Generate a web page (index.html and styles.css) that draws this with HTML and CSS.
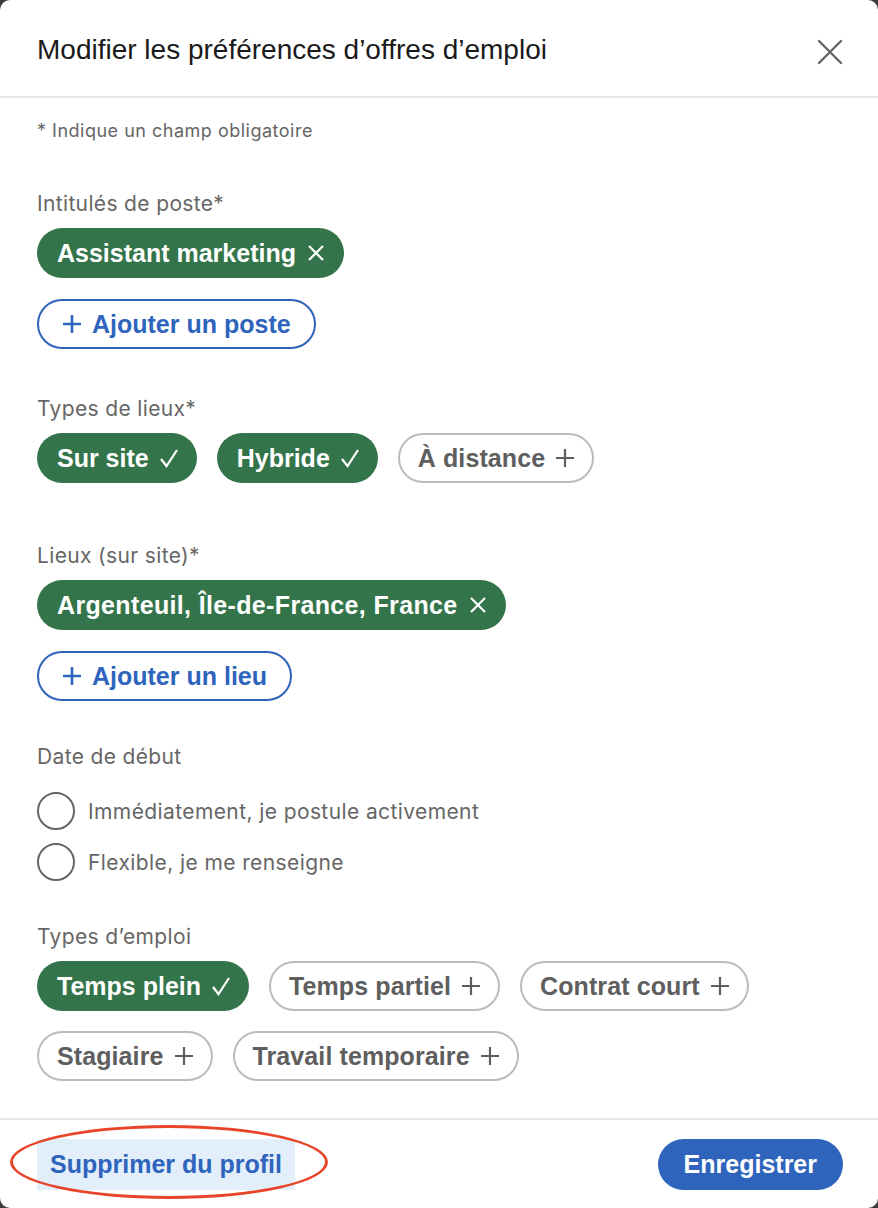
FILE: index.html
```html
<!DOCTYPE html>
<html lang="fr">
<head>
    <meta charset="UTF-8">
    <meta name="viewport" content="width=device-width, initial-scale=1.0">
    <title>Modifier les préférences d’offres d’emploi</title>
    <link rel="stylesheet" href="styles.css">
</head>
<body>
    <div class="modal">
        <div class="modal-header">
            <h2 class="modal-title">Modifier les préférences d’offres d’emploi</h2>
            <button class="close-btn" aria-label="Fermer">
                <svg width="26" height="26" viewBox="0 0 26 26"><path d="M2 2 L24 24 M24 2 L2 24" stroke="#666" stroke-width="2.4" stroke-linecap="round"/></svg>
            </button>
        </div>

        <div class="modal-body">
            <p class="required-note">* Indique un champ obligatoire</p>

            <div class="field field-first">
                <div class="field-label">Intitulés de poste*</div>
                <div class="chips">
                    <span class="chip chip-selected">Assistant marketing<svg class="icon" viewBox="0 0 20 20"><path d="M3 3 L17 17 M17 3 L3 17"/></svg></span>
                </div>
                <button class="add-btn"><svg class="icon plus-icon" viewBox="0 0 20 20"><path d="M10 1 V19 M1 10 H19"/></svg>Ajouter un poste</button>
            </div>

            <div class="field field-after-btn">
                <div class="field-label">Types de lieux*</div>
                <div class="chips">
                    <span class="chip chip-selected">Sur site<svg class="icon" viewBox="0 0 20 20"><path d="M2 11 L7.5 18 L18 2"/></svg></span>
                    <span class="chip chip-selected">Hybride<svg class="icon" viewBox="0 0 20 20"><path d="M2 11 L7.5 18 L18 2"/></svg></span>
                    <span class="chip chip-outline">À distance<svg class="icon" viewBox="0 0 20 20"><path d="M10 1 V19 M1 10 H19"/></svg></span>
                </div>
            </div>

            <div class="field field-after-chips">
                <div class="field-label">Lieux (sur site)*</div>
                <div class="chips">
                    <span class="chip chip-selected chip-wide">Argenteuil, Île-de-France, France<svg class="icon" viewBox="0 0 20 20"><path d="M3 3 L17 17 M17 3 L3 17"/></svg></span>
                </div>
                <button class="add-btn"><svg class="icon plus-icon" viewBox="0 0 20 20"><path d="M10 1 V19 M1 10 H19"/></svg>Ajouter un lieu</button>
            </div>

            <div class="field field-tight">
                <div class="field-label">Date de début</div>
                <div class="radios">
                    <label class="radio-row"><span class="radio"></span>Immédiatement, je postule activement</label>
                    <label class="radio-row"><span class="radio"></span>Flexible, je me renseigne</label>
                </div>
            </div>

            <div class="field field-tight">
                <div class="field-label">Types d’emploi</div>
                <div class="chips chips-wrap">
                    <span class="chip chip-selected">Temps plein<svg class="icon" viewBox="0 0 20 20"><path d="M2 11 L7.5 18 L18 2"/></svg></span>
                    <span class="chip chip-outline">Temps partiel<svg class="icon" viewBox="0 0 20 20"><path d="M10 1 V19 M1 10 H19"/></svg></span>
                    <span class="chip chip-outline">Contrat court<svg class="icon" viewBox="0 0 20 20"><path d="M10 1 V19 M1 10 H19"/></svg></span>
                    <span class="chip chip-outline">Stagiaire<svg class="icon" viewBox="0 0 20 20"><path d="M10 1 V19 M1 10 H19"/></svg></span>
                    <span class="chip chip-outline">Travail temporaire<svg class="icon" viewBox="0 0 20 20"><path d="M10 1 V19 M1 10 H19"/></svg></span>
                </div>
            </div>
        </div>

        <div class="modal-footer">
            <div class="delete-wrap">
                <button class="delete-btn">Supprimer du profil</button>
                <span class="annotation"></span>
            </div>
            <button class="save-btn">Enregistrer</button>
        </div>
    </div>
</body>
</html>
```

FILE: styles.css
```css
body {
    margin: 0;
    padding: 0;
    background: #3b3b3b;
    font-family: "Liberation Sans", Arial, sans-serif;
}
.modal {
    width: 878px;
    height: 1208px;
    background: #fff;
    border-radius: 10px;
    display: flex;
    flex-direction: column;
}
.modal-header {
    display: flex;
    justify-content: space-between;
    align-items: center;
    height: 98px;
    padding: 0 35px 0 37px;
    border-bottom: 2px solid #e8e8e8;
    box-sizing: border-box;
}
.modal-title {
    margin: 0 0 -4px;
    font-size: 28px;
    font-weight: 400;
    color: #1a1a1a;
}
.close-btn {
    background: none;
    border: none;
    padding: 0;
    margin-top: 8px;
    width: 26px;
    height: 26px;
    cursor: pointer;
}
.modal-body {
    flex: 1;
    padding: 0 37px;
}
.required-note {
    margin: 23px 0 0;
    font-family: Inter, "Liberation Sans", sans-serif;
    font-size: 18px;
    line-height: 20px;
    letter-spacing: 0.5px;
    color: #666;
}
.field-first { margin-top: 51px; }
.field-after-btn { margin-top: 48px; }
.field-after-chips { margin-top: 61px; }
.field-tight { margin-top: 44px; }
.field-label {
    font-family: Inter, "Liberation Sans", sans-serif;
    font-size: 21px;
    line-height: 24px;
    letter-spacing: 0.35px;
    color: #666;
    margin-bottom: 12px;
}
.chips {
    display: flex;
    flex-wrap: wrap;
    gap: 21px 20px;
}
.chips-wrap {
    row-gap: 20px;
}
.chip {
    display: inline-flex;
    align-items: center;
    height: 50px;
    box-sizing: border-box;
    padding: 0 18px 0 20px;
    border-radius: 25px;
    font-size: 25px;
    font-weight: 700;
    white-space: pre;
}
.chip-wide {
    letter-spacing: 0.35px;
}
.icon {
    width: 20px;
    height: 20px;
    margin-left: 10px;
    fill: none;
    stroke: currentColor;
    stroke-width: 2.2;
}
.chip-selected {
    background: #34744a;
    color: #fff;
}
.chip-outline {
    border: 2px solid #bcbcbc;
    color: #5e5e5e;
    padding: 0 17px 0 18px;
    letter-spacing: 0.1px;
}
.add-btn {
    display: flex;
    align-items: center;
    margin-top: 21px;
    height: 50px;
    padding: 0 23px;
    border: 2px solid #2e64bc;
    border-radius: 25px;
    background: #fff;
    color: #2e64bc;
    font-family: inherit;
    font-size: 25px;
    font-weight: 700;
    white-space: pre;
}
.add-btn .plus-icon {
    margin: 0 10px 0 0;
    stroke-width: 2.6;
}
.radios {
    display: flex;
    flex-direction: column;
    gap: 13px;
    margin-top: 23px;
}
.radio-row {
    display: flex;
    align-items: center;
    gap: 13px;
    height: 38px;
    font-family: Inter, "Liberation Sans", sans-serif;
    font-size: 21px;
    letter-spacing: 0.4px;
    color: #666;
}
.radio {
    width: 38px;
    height: 38px;
    box-sizing: border-box;
    border: 2px solid #666;
    border-radius: 50%;
}
.modal-footer {
    display: flex;
    justify-content: space-between;
    align-items: center;
    height: 88px;
    padding: 0 35px 0 37px;
    border-top: 2px solid #e8e8e8;
}
.delete-wrap {
    position: relative;
}
.delete-btn {
    background: #e3eefb;
    border: none;
    height: 51px;
    padding: 0 13px;
    color: #2e64bc;
    font-family: inherit;
    font-size: 25px;
    font-weight: 700;
}
.annotation {
    position: absolute;
    left: -27px;
    top: -14px;
    width: 318px;
    height: 74px;
    border: 3px solid #e8442a;
    border-radius: 50%;
    box-sizing: border-box;
}
.save-btn {
    background: #2e64bc;
    border: none;
    height: 51px;
    padding: 0 26px;
    border-radius: 26px;
    color: #fff;
    font-family: inherit;
    font-size: 25px;
    font-weight: 700;
}
```
